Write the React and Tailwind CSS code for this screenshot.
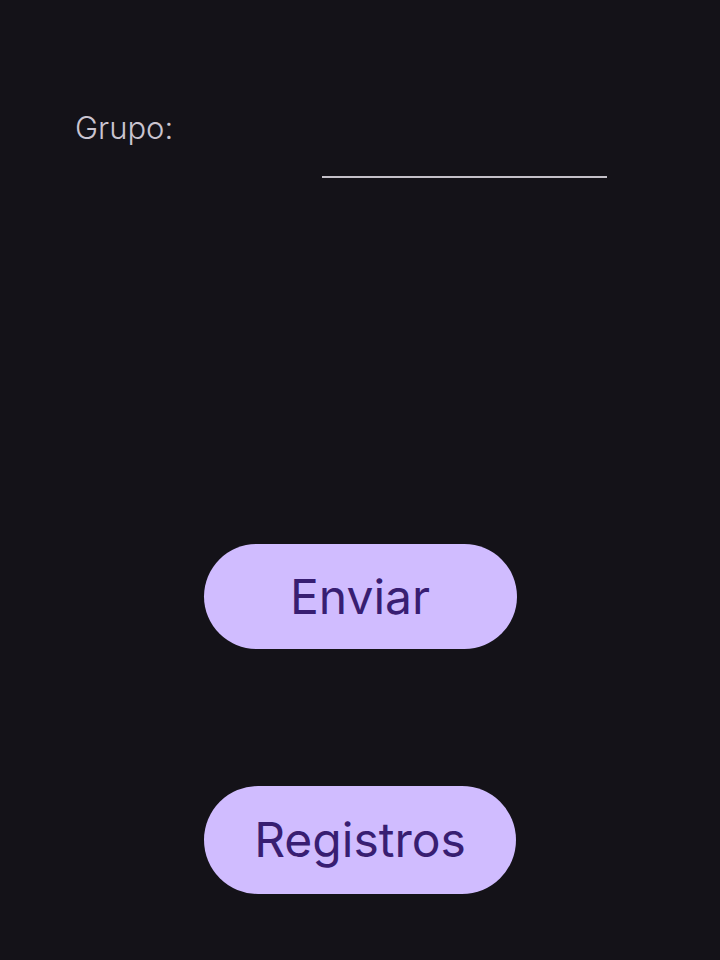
export default function App() {
  return (
    <div className="min-h-[960px] bg-[#141218] font-['Inter','Noto_Sans',sans-serif]">
      <div className="h-[200px]">
        <div className="flex pt-[110px] pl-[75px]">
          <label className="text-[31px] leading-[36px] font-light text-[#cac4d0]">Grupo:</label>
        </div>
        <div className="ml-[322px] mt-[15px] w-[285px] h-[17px] border-b-2 border-[#c4c0c8]" />
      </div>

      <div className="flex flex-col items-center pt-[344px]">
        <button className="w-[313px] h-[105px] rounded-full bg-[#d0bcff] text-[#381e72] text-[48px] leading-none">
          Enviar
        </button>
        <button className="mt-[137px] w-[312px] h-[108px] rounded-full bg-[#d0bcff] text-[#381e72] text-[48px] leading-none">
          Registros
        </button>
      </div>
    </div>
  );
}
